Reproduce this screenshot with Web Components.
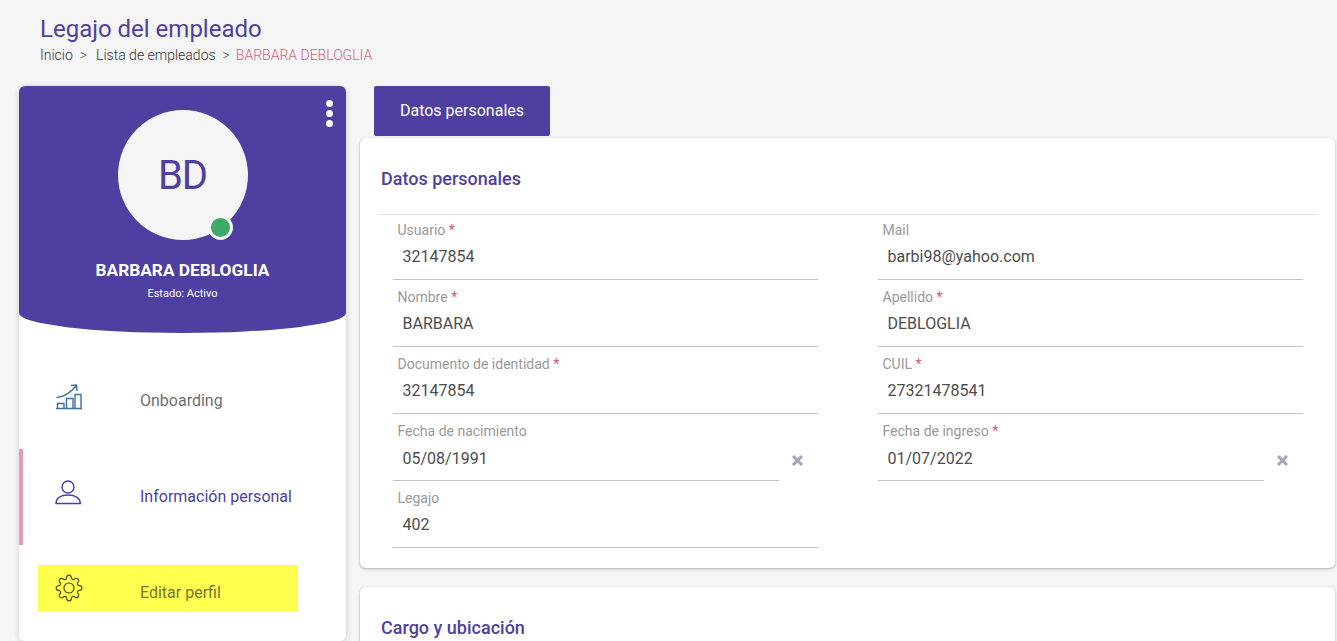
<!DOCTYPE html>
<html lang="en">
<head>
    <meta charset="UTF-8">
    <title>Legajo del empleado</title>
    <style>
        html,body{
            margin:0;
            height:641px;
            overflow:hidden;
            background:#f5f5f5;
            font-family:Roboto,"Liberation Sans",sans-serif;
        }
        .layout{
            display:flex;
            align-items:flex-start;
            padding-left:19px;
        }
        .content{
            display:flex;
            flex-direction:column;
            margin-left:14px;
            width:975px;
        }
    </style>
</head>
<body>
    <page-header></page-header>
    <div class="layout">
        <profile-card name="BARBARA DEBLOGLIA" initials="BD" status="Estado: Activo">
            <side-item label="Onboarding" icon="chart"></side-item>
            <side-item label="Información personal" icon="user" active></side-item>
            <side-item label="Editar perfil" icon="gear" marked></side-item>
        </profile-card>
        <div class="content">
            <tab-button>Datos personales</tab-button>
            <form-panel heading="Datos personales">
                <form-field label="Usuario" required>32147854</form-field>
                <form-field label="Mail">barbi98@yahoo.com</form-field>
                <form-field label="Nombre" required>BARBARA</form-field>
                <form-field label="Apellido" required>DEBLOGLIA</form-field>
                <form-field label="Documento de identidad" required>32147854</form-field>
                <form-field label="CUIL" required>27321478541</form-field>
                <form-field label="Fecha de nacimiento" clearable>05/08/1991</form-field>
                <form-field label="Fecha de ingreso" required clearable>01/07/2022</form-field>
                <form-field label="Legajo">402</form-field>
            </form-panel>
            <form-panel heading="Cargo y ubicación" style="margin-top:19px"></form-panel>
        </div>
    </div>

    <template id="page-header">
        <style>
            :host{display:block;height:86px;padding-left:40px;box-sizing:border-box;color:#4f3fa0;}
            h1{margin:0;padding-top:14px;font-size:24px;font-weight:400;line-height:30px;}
            nav{display:flex;margin-top:3px;font-size:14px;font-weight:300;line-height:16px;color:#333;}
            .sep{margin:0 9px 0 7px;color:#555;}
            .sep.b{margin:0 6px 0 7px;}
            .now{color:#d9608a;}
        </style>
        <h1>Legajo del empleado</h1>
        <nav><span>Inicio</span><span class="sep">&gt;</span><span>Lista de empleados</span><span class="sep b">&gt;</span><span class="now">BARBARA DEBLOGLIA</span></nav>
    </template>

    <template id="profile-card">
        <style>
            :host{display:block;width:327px;flex:none;background:#fff;border-radius:6px;box-shadow:0 1px 6px rgba(0,0,0,.16);}
            .top{
                position:relative;
                height:247px;
                box-sizing:border-box;
                padding-top:24px;
                background:#4f3fa0;
                color:#fff;
                border-radius:6px 6px 50% 50% / 6px 6px 20px 20px;
                display:flex;
                flex-direction:column;
                align-items:center;
            }
            .avatar{
                position:relative;
                width:130px;
                height:130px;
                border-radius:50%;
                background:#f5f5f5;
                color:#4f3fa0;
                font-size:40px;
                letter-spacing:-1px;
                display:flex;
                align-items:center;
                justify-content:center;
            }
            .dot{
                position:absolute;
                left:90px;
                top:105px;
                width:19px;
                height:19px;
                border:3px solid #f5f5f5;
                border-radius:50%;
                background:#3dab67;
            }
            .menu{position:absolute;top:14px;right:13px;display:flex;flex-direction:column;gap:3px;}
            .menu i{display:block;width:7px;height:7px;border-radius:50%;background:#fff;}
            .name{margin-top:21px;font-size:17.3px;font-weight:700;line-height:19px;}
            .status{margin-top:7px;font-size:11px;line-height:13px;}
            .items{padding-top:20px;}
        </style>
        <div class="top">
            <div class="menu"><i></i><i></i><i></i></div>
            <div class="avatar"><span class="initials"></span><span class="dot"></span></div>
            <div class="name"></div>
            <div class="status"></div>
        </div>
        <div class="items"><slot></slot></div>
    </template>

    <template id="side-item">
        <style>
            :host{display:block;height:96px;box-sizing:border-box;padding-top:20px;position:relative;font-size:16px;color:#6f6f6f;}
            :host([active]){color:#4f3fa0;}
            :host([active])::before{content:"";position:absolute;left:0;top:0;width:4px;height:96px;background:#e79ab8;}
            .row{
                display:flex;
                align-items:center;
                width:260px;
                height:47px;
                margin-left:19px;
                padding-left:17px;
                box-sizing:border-box;
            }
            :host([marked]) .row{background:#ffff4d;color:#77752a;}
            .icon{display:flex;margin-top:-1px;}
            svg{width:28px;height:28px;flex:none;fill:none;stroke-width:1.4;}
            .label{margin-left:57px;padding-top:8px;line-height:19px;}
        </style>
        <div class="row"><span class="icon"></span><span class="label"></span></div>
    </template>

    <template id="tab-button">
        <style>
            :host{
                display:flex;
                align-items:center;
                justify-content:center;
                align-self:flex-start;
                margin-left:14px;
                margin-bottom:2px;
                width:176px;
                height:50px;
                box-sizing:border-box;
                padding-bottom:2px;
                border-radius:2px;
                background:#4f3fa0;
                color:#fff;
                font-size:16px;
            }
        </style>
        <slot></slot>
    </template>

    <template id="form-panel">
        <style>
            :host{display:block;background:#fff;border-radius:6px;box-shadow:0 1px 3px rgba(0,0,0,.3);}
            h2{margin:0;padding:30px 0 0 21px;height:76px;box-sizing:border-box;font-size:18px;font-weight:500;line-height:21px;color:#4f3fa0;}
            .body{margin:0 18px 0 19px;border-top:1px solid #e2e2e2;padding:0 0 20px 14px;}
            .grid{display:grid;grid-template-columns:425px 425px;column-gap:60px;row-gap:2px;}
        </style>
        <h2></h2>
        <div class="body"><div class="grid"><slot></slot></div></div>
    </template>

    <template id="form-field">
        <style>
            :host{display:block;position:relative;height:65px;box-sizing:border-box;padding-top:7px;}
            .label{padding-left:4.5px;font-size:14px;line-height:16px;color:#999;}
            .req{color:#d9537f;}
            .line{
                margin-top:7px;
                height:35px;
                box-sizing:border-box;
                padding-left:9.5px;
                border-bottom:1px solid #c4c4c4;
                font-size:16px;
                line-height:24px;
                color:#4d4d4d;
            }
            :host([clearable]) .line{margin-right:39px;padding-top:1px;}
            svg{position:absolute;right:15px;top:39px;width:11px;height:11px;stroke:#a3a3ba;stroke-width:3;}
        </style>
        <div class="label"></div>
        <div class="line"><slot></slot></div>
    </template>

    <script>
        const icons = {
            chart:{color:'#3d7099',svg:`<svg viewBox="0 0 28 28"><path d="M1 26.500H27M2.500 26.500V21.500H9V26.500M11.500 26.500V16.500H18V26.500M20 26.500V12.500H26V26.500M1.500 15.500C9 15 16 10 21 4M16 3.500L21.500 3L22 9"/></svg>`},
            user:{color:'#4f3fa0',svg:`<svg viewBox="0 0 28 28"><circle cx="13" cy="9" r="6"/><path d="M1 25.500C1 20 6 17 13 17S25 20 25.500 25.500Z"/></svg>`},
            gear:{color:'#4a4b12',svg:`<svg viewBox="0 0 24 24" style="stroke-width:1"><circle cx="12" cy="12" r="4.300"/><path d="M19.400 15a1.650 1.650 0 0 0 .33 1.820l.06.06a2 2 0 0 1 0 2.830 2 2 0 0 1-2.830 0l-.06-.06a1.650 1.650 0 0 0-1.820-.33 1.650 1.650 0 0 0-1 1.510V21a2 2 0 0 1-2 2 2 2 0 0 1-2-2v-.09A1.650 1.650 0 0 0 9 19.400a1.650 1.650 0 0 0-1.820.33l-.06.06a2 2 0 0 1-2.830 0 2 2 0 0 1 0-2.830l.06-.06a1.650 1.650 0 0 0 .33-1.820 1.650 1.650 0 0 0-1.510-1H3a2 2 0 0 1-2-2 2 2 0 0 1 2-2h.09A1.650 1.650 0 0 0 4.600 9a1.650 1.650 0 0 0-.33-1.820l-.06-.06a2 2 0 0 1 0-2.830 2 2 0 0 1 2.830 0l.06.06a1.650 1.650 0 0 0 1.820.33H9a1.650 1.650 0 0 0 1-1.510V3a2 2 0 0 1 2-2 2 2 0 0 1 2 2v.09a1.650 1.650 0 0 0 1 1.510 1.650 1.650 0 0 0 1.820-.33l.06-.06a2 2 0 0 1 2.830 0 2 2 0 0 1 0 2.830l-.06.06a1.650 1.650 0 0 0-.33 1.820V9a1.650 1.650 0 0 0 1.510 1H21a2 2 0 0 1 2 2 2 2 0 0 1-2 2h-.09a1.650 1.650 0 0 0-1.510 1z"/></svg>`}
        };

        class BaseElement extends HTMLElement{
            constructor(){
                super();
                const shadow = this.attachShadow({mode:'open'});
                const templateDOM = document.getElementById(this.localName);
                shadow.appendChild(templateDOM.content.cloneNode(true));
            }
        }
        class PageHeader extends BaseElement{}
        class TabButton extends BaseElement{}
        class ProfileCard extends BaseElement{
            connectedCallback(){
                const root = this.shadowRoot;
                root.querySelector('.initials').textContent = this.getAttribute('initials');
                root.querySelector('.name').textContent = this.getAttribute('name');
                root.querySelector('.status').textContent = this.getAttribute('status');
            }
        }
        class SideItem extends BaseElement{
            connectedCallback(){
                const icon = icons[this.getAttribute('icon')];
                const box = this.shadowRoot.querySelector('.icon');
                box.innerHTML = icon.svg;
                box.querySelector('svg').style.stroke = icon.color;
                this.shadowRoot.querySelector('.label').textContent = this.getAttribute('label');
            }
        }
        class FormPanel extends BaseElement{
            connectedCallback(){
                this.shadowRoot.querySelector('h2').textContent = this.getAttribute('heading');
            }
        }
        class FormField extends BaseElement{
            connectedCallback(){
                const label = this.shadowRoot.querySelector('.label');
                label.textContent = this.getAttribute('label');
                if(this.hasAttribute('required')){
                    label.insertAdjacentHTML('beforeend',' <span class="req">*</span>');
                }
                if(this.hasAttribute('clearable')){
                    this.shadowRoot.appendChild(document.createRange().createContextualFragment(
                        '<svg viewBox="0 0 11 11"><path d="M1 1l9 9M10 1l-9 9"/></svg>'));
                }
            }
        }
        customElements.define('page-header',PageHeader);
        customElements.define('tab-button',TabButton);
        customElements.define('profile-card',ProfileCard);
        customElements.define('side-item',SideItem);
        customElements.define('form-panel',FormPanel);
        customElements.define('form-field',FormField);
    </script>
</body>
</html>
